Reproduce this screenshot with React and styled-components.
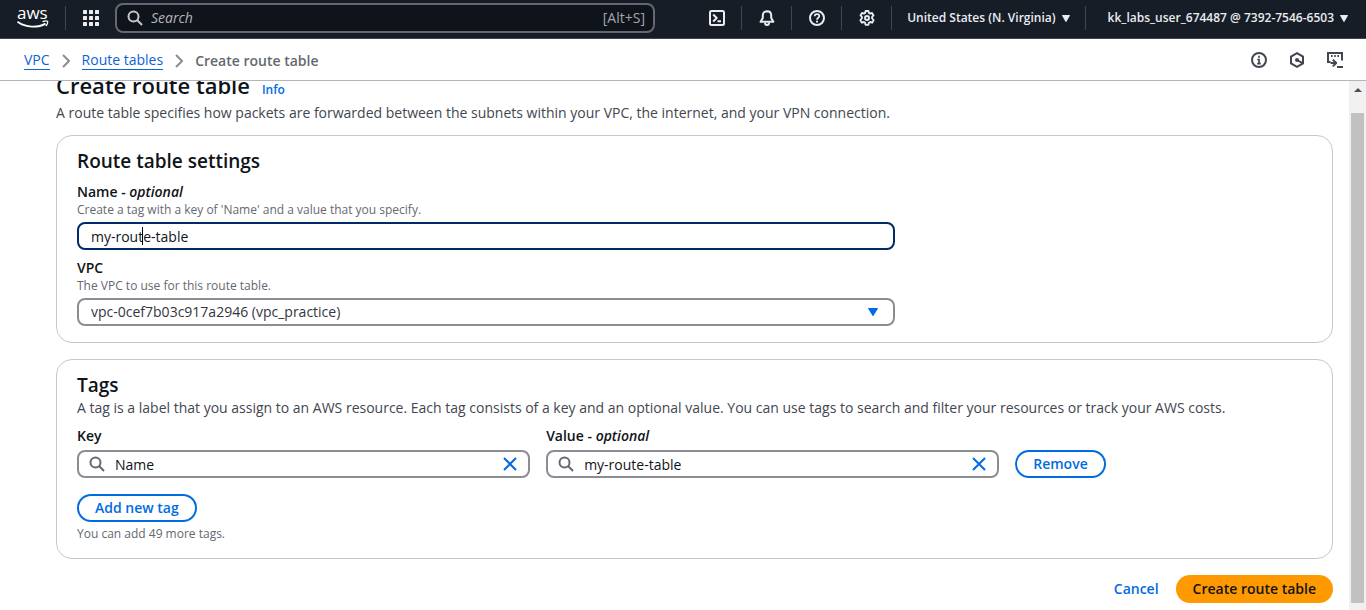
import React, { useLayoutEffect, useRef, useState } from "react";
import styled, { createGlobalStyle } from "styled-components";

const Global = createGlobalStyle`
  *, *::before, *::after { box-sizing: border-box; }
  body {
    margin: 0;
    background: #ffffff;
    color: #0f141a;
    font-family: "Open Sans", "Noto Sans", "Liberation Sans", sans-serif;
    font-size: 14px;
    line-height: 20px;
  }
  button, input, select { font: inherit; color: inherit; margin: 0; }
`;

const Shell = styled.div`
  display: flex;
  flex-direction: column;
  height: 100vh;
`;

const TopBar = styled.header`
  display: flex;
  align-items: center;
  flex: none;
  height: 39px;
  padding-bottom: 2px;
  background: #161d26;
  border-bottom: 1px solid #424650;
  color: #ebebf0;
`;

const LogoLink = styled.a`
  display: flex;
  justify-content: center;
  width: 66px;
  height: 24px;
  color: #ffffff;
  border-right: 1px solid #424650;
  svg { overflow: visible; }
`;

const BarButton = styled.button`
  display: flex;
  align-items: center;
  justify-content: center;
  height: 24px;
  width: ${(p) => (p.$last ? "49px" : "50px")};
  padding: 0;
  background: none;
  border: 0;
  border-right: ${(p) => (p.$last ? "0" : "1px solid #424650")};
  color: #ebebf0;
`;

const BarMenu = styled(BarButton)`
  gap: 6px;
  width: auto;
  padding: ${(p) => (p.$last ? "0 18px 0 22px" : "0 15px")};
  font-size: 12px;
  font-weight: 600;
  white-space: nowrap;
`;

const GlobalSearch = styled.label`
  display: flex;
  align-items: center;
  flex: 0 1 540px;
  height: 30px;
  padding: 0 8px 0 10px;
  gap: 8px;
  background: #0f141a;
  border: 2px solid #656871;
  border-radius: 8px;
  color: #c6c6cd;
  input {
    flex: 1;
    min-width: 0;
    padding: 0;
    background: none;
    border: 0;
    outline: 0;
  }
  input::placeholder { color: #b4b4bb; font-style: italic; opacity: 1; }
`;

const Shortcut = styled.span`
  color: #a4a4ad;
`;

const BarEnd = styled.div`
  display: flex;
  margin-left: auto;
`;

const SubBar = styled.div`
  display: flex;
  align-items: center;
  justify-content: space-between;
  flex: none;
  height: 42px;
  padding: 0 23px 0 24px;
  border-bottom: 1px solid #b4b4bb;
`;

const Crumbs = styled.nav`
  display: flex;
  align-items: center;
  gap: 12px;
  padding-top: 2px;
  color: #8c8c94;
  line-height: 18px;
`;

const CrumbLink = styled.a`
  color: #0f62d6;
  text-decoration: none;
  border-bottom: 1px solid #0f62d6;
`;

const CrumbCurrent = styled.span`
  color: #656871;
  font-weight: 600;
`;

const Tools = styled.div`
  display: flex;
  gap: 22px;
`;

const ToolButton = styled.button`
  display: flex;
  padding: 0;
  background: none;
  border: 0;
  color: #424650;
`;

const Body = styled.div`
  display: flex;
  flex: 1;
  min-height: 0;
`;

const ScrollArea = styled.main`
  flex: 1;
  min-width: 0;
  overflow-y: scroll;
  scrollbar-width: none;
  padding: 20px 16px 0 56px;
`;

const Content = styled.div`
  display: flex;
  flex-direction: column;
  gap: 16px;
  padding-bottom: 48px;
`;

const Rail = styled.div`
  display: flex;
  flex-direction: column;
  align-items: center;
  flex: none;
  width: 17px;
  padding-bottom: 7px;
  background: #f1f1f1;
  color: #505050;
`;

const RailArrow = styled.div`
  display: flex;
  align-items: center;
  justify-content: center;
  height: 17px;
  margin-bottom: 15px;
`;

const Thumb = styled.div`
  flex: 1;
  width: 13px;
  background: #c1c1c1;
`;

const PageHead = styled.div`
  margin-bottom: -4px;
`;

const TitleRow = styled.div`
  display: flex;
  align-items: baseline;
  gap: 12px;
  height: 32px;
`;

const PageTitle = styled.h1`
  margin: 0;
  font-size: 22px;
  line-height: 28px;
  font-weight: 600;
`;

const InfoLink = styled.a`
  color: #006ce0;
  font-size: 12px;
  font-weight: 600;
  text-decoration: none;
`;

const Lead = styled.p`
  margin: 0;
  color: #424650;
`;

const Card = styled.section`
  padding: 12px 20px 16px;
  border: 1px solid #c6c6cd;
  border-radius: 16px;
`;

const CardTitle = styled.h2`
  margin: 0;
  font-size: 19px;
  line-height: 26px;
  font-weight: 600;
`;

const FormGrid = styled.div`
  display: grid;
  grid-template-columns: repeat(12, 1fr);
  gap: 8px 16px;
  margin-top: 8px;
`;

const TagGrid = styled.div`
  display: grid;
  grid-template-columns: repeat(8, 1fr);
  align-items: end;
  gap: 16px;
  margin: 8px 0 16px;
`;

const Field = styled.div`
  grid-column: ${(p) => (p.$start ? "1 / " : "")}span ${(p) => p.$span};
  min-width: 0;
`;

const Label = styled.label`
  display: block;
  font-weight: 600;
`;

const Hint = styled.p`
  margin: ${(p) => (p.$below ? "4px 0 0" : "0")};
  color: #656871;
  font-size: 12px;
  line-height: 16px;
`;

const Control = styled.div`
  position: relative;
  display: flex;
  align-items: center;
  gap: 10px;
  height: 28px;
  margin-top: 4px;
  padding: ${(p) => (p.$search ? "0 10px" : "0 15px 0 12px")};
  border: 2px solid ${(p) => (p.$active ? "#002b66" : "#8c8c94")};
  border-radius: 8px;
  color: #656871;
  input, select {
    flex: 1;
    min-width: 0;
    height: 24px;
    padding: 0;
    background: none;
    border: 0;
    outline: 0;
    appearance: none;
    color: #0f141a;
  }
  select { color: #33363d; }
  > svg { flex: none; }
`;

const Caret = styled.span`
  position: absolute;
  left: 63px;
  top: 3px;
  width: 1px;
  height: 18px;
  background: #000000;
`;

const ClearButton = styled.button`
  display: flex;
  padding: 0;
  background: none;
  border: 0;
  color: #006ce0;
`;

const Button = styled.button`
  height: 28px;
  padding: 0 ${(p) => (p.$kind === "normal" ? "16px" : "15px")};
  border: 2px solid ${(p) => (p.$kind === "normal" ? "#006ce0" : p.$kind === "primary" ? "#ff9900" : "transparent")};
  border-radius: 14px;
  background: ${(p) => (p.$kind === "primary" ? "#ff9900" : "#ffffff")};
  color: ${(p) => (p.$kind === "primary" ? "#0f141a" : "#006ce0")};
  font-weight: 600;
  line-height: 20px;
  white-space: nowrap;
`;

const Actions = styled.div`
  display: flex;
  justify-content: flex-end;
`;

const Icon = ({ size = 16, width = 2, children }) => (
  <svg width={size} height={size} viewBox="0 0 16 16" fill="none" stroke="currentColor" strokeWidth={width} strokeLinejoin="round" aria-hidden="true">
    {children}
  </svg>
);

const AwsLogo = () => (
  <svg width="34" height="24" viewBox="0 0 34 24" fill="none" aria-hidden="true">
    <text x="1" y="13" fill="currentColor" fontSize="17" fontWeight="500">aws</text>
    <path d="M1.500 15.800C10 22 22 22 29.500 17.600" stroke="currentColor" strokeWidth="1.800" />
    <path d="M26.500 15.600C29 14.800 31 14.800 31.500 15.400C32 16.200 31.200 18.600 29.800 20" stroke="currentColor" strokeWidth="1.400" />
  </svg>
);

const GridIcon = () => (
  <svg width="16" height="16" viewBox="0 0 16 16" fill="currentColor" aria-hidden="true">
    {[0, 6, 12].map((y) => [0, 6, 12].map((x) => <rect key={`${x}-${y}`} x={x} y={y} width="4" height="4" rx="0.5" />))}
  </svg>
);

const SearchIcon = () => (
  <Icon>
    <circle cx="6.500" cy="6.500" r="5" />
    <path d="M10.300 10.300L15 15" />
  </Icon>
);

const CloseIcon = () => (
  <Icon>
    <path d="M2 2l12 12M14 2L2 14" />
  </Icon>
);

const ChevronIcon = () => (
  <svg width="8" height="14" viewBox="0 0 8 14" fill="none" stroke="currentColor" strokeWidth="2" aria-hidden="true">
    <path d="M1 1l6 6-6 6" />
  </svg>
);

const DownTriangle = ({ width = 8, height = 7, fill = "currentColor" }) => (
  <svg width={width} height={height} viewBox="0 0 10 8" fill={fill} preserveAspectRatio="none" aria-hidden="true">
    <path d="M0 0.500Q0 0 0.600 0H9.400Q10 0 10 0.500L5.500 7.700Q5 8.200 4.500 7.700Z" />
  </svg>
);

const TerminalIcon = () => (
  <Icon>
    <rect x="1" y="1" width="14" height="14" rx="1.500" />
    <path d="M4.200 4.500L7.700 8l-3.500 3.500M8.500 11.200H12" />
  </Icon>
);

const BellIcon = () => (
  <Icon>
    <path d="M8 1.200C5.300 1.200 3.800 3 3.800 5.500V8L1.600 11.800H14.400L12.200 8V5.500C12.200 3 10.700 1.200 8 1.200Z" />
    <path d="M6 12.500c0 1.600 .8 2.500 2 2.500s2-.9 2-2.500" />
  </Icon>
);

const HelpIcon = () => (
  <Icon>
    <circle cx="8" cy="8" r="7" />
    <path d="M5.700 6.300C5.700 4.800 6.700 4.100 8 4.100S10.300 4.900 10.300 6.100C10.300 7.700 8 7.800 8 9.700" strokeWidth="1.700" />
    <path d="M8 10.700v1.800" />
  </Icon>
);

const GearIcon = () => (
  <Icon width={1.900}>
    <path d="M6.600 1h2.800l.5 1.900 1.200.7 1.900-.6 1.500 2.400-1.400 1.400v1.400l1.500 2-1.500 2.500-2-.7-1.200.7-.5 2.200H6.600l-.5-2.200-1.200-.7-2 .7-1.500-2.500 1.500-2V6.800L1.500 5.400 3 3l1.900.6 1.200-.7z" />
    <circle cx="8" cy="8" r="2" />
  </Icon>
);

const InfoIcon = () => (
  <Icon>
    <circle cx="8" cy="8" r="7" />
    <path d="M8 3.800v2M6.300 7.500H8V12M6.200 11.700h3.600" strokeWidth="1.700" strokeLinejoin="miter" />
  </Icon>
);

const HexIcon = () => (
  <Icon>
    <path d="M8 1.200L14 4.600v6.800L8 14.800 2 11.400V4.600z" strokeLinejoin="miter" />
    <circle cx="8" cy="8" r="2" fill="currentColor" stroke="none" />
    <path d="M8 8l5.500 3.200" />
  </Icon>
);

const ShellIcon = () => (
  <Icon>
    <path d="M3.500 10H1V1h14v7.500" strokeLinejoin="miter" />
    <path d="M4 4h1.600M7.200 4h1.600M10.400 4H12" />
    <path d="M3.500 11H8M5.800 7.600L9.200 11l-3.400 3.400" />
    <path d="M10 15h6" />
  </Icon>
);

function TagInput({ id, label, optional, initial }) {
  const [value, setValue] = useState(initial);
  return (
    <Field $span={3}>
      <Label htmlFor={id}>
        {label}
        {optional && <> - <em>optional</em></>}
      </Label>
      <Control $search>
        <SearchIcon />
        <input id={id} value={value} onChange={(e) => setValue(e.target.value)} />
        <ClearButton type="button" aria-label={`Clear ${label}`} onClick={() => setValue("")}>
          <CloseIcon />
        </ClearButton>
      </Control>
    </Field>
  );
}

export default function App() {
  const scroller = useRef(null);
  useLayoutEffect(() => {
    scroller.current.scrollTop = 30;
  }, []);

  return (
    <Shell>
      <Global />
      <TopBar>
        <LogoLink href="#home" aria-label="AWS home"><AwsLogo /></LogoLink>
        <BarButton $last aria-label="Services"><GridIcon /></BarButton>
        <GlobalSearch>
          <SearchIcon />
          <input type="text" placeholder="Search" aria-label="Search" />
          <Shortcut>[Alt+S]</Shortcut>
        </GlobalSearch>
        <BarEnd>
          <BarButton aria-label="CloudShell"><TerminalIcon /></BarButton>
          <BarButton aria-label="Notifications"><BellIcon /></BarButton>
          <BarButton aria-label="Help"><HelpIcon /></BarButton>
          <BarButton aria-label="Settings"><GearIcon /></BarButton>
          <BarMenu>United States (N. Virginia) <DownTriangle /></BarMenu>
          <BarMenu $last>kk_labs_user_674487 @ 7392-7546-6503 <DownTriangle /></BarMenu>
        </BarEnd>
      </TopBar>

      <SubBar>
        <Crumbs aria-label="Breadcrumbs">
          <CrumbLink href="#vpc">VPC</CrumbLink>
          <ChevronIcon />
          <CrumbLink href="#route-tables">Route tables</CrumbLink>
          <ChevronIcon />
          <CrumbCurrent>Create route table</CrumbCurrent>
        </Crumbs>
        <Tools>
          <ToolButton aria-label="Info panel"><InfoIcon /></ToolButton>
          <ToolButton aria-label="Diagnostics"><HexIcon /></ToolButton>
          <ToolButton aria-label="Open shell"><ShellIcon /></ToolButton>
        </Tools>
      </SubBar>

      <Body>
        <ScrollArea ref={scroller}>
          <Content>
            <PageHead>
              <TitleRow>
                <PageTitle>Create route table</PageTitle>
                <InfoLink href="#info">Info</InfoLink>
              </TitleRow>
              <Lead>A route table specifies how packets are forwarded between the subnets within your VPC, the internet, and your VPN connection.</Lead>
            </PageHead>

            <Card>
              <CardTitle>Route table settings</CardTitle>
              <FormGrid>
                <Field $start $span={8}>
                  <Label htmlFor="rt-name">Name - <em>optional</em></Label>
                  <Hint>Create a tag with a key of 'Name' and a value that you specify.</Hint>
                  <Control $active>
                    <input id="rt-name" defaultValue="my-route-table" />
                    <Caret />
                  </Control>
                </Field>
                <Field $start $span={8}>
                  <Label htmlFor="rt-vpc">VPC</Label>
                  <Hint>The VPC to use for this route table.</Hint>
                  <Control>
                    <select id="rt-vpc">
                      <option>vpc-0cef7b03c917a2946 (vpc_practice)</option>
                    </select>
                    <DownTriangle width={10} height={8} fill="#006ce0" />
                  </Control>
                </Field>
              </FormGrid>
            </Card>

            <Card>
              <CardTitle>Tags</CardTitle>
              <Lead>A tag is a label that you assign to an AWS resource. Each tag consists of a key and an optional value. You can use tags to search and filter your resources or track your AWS costs.</Lead>
              <TagGrid>
                <TagInput id="tag-key" label="Key" initial="Name" />
                <TagInput id="tag-value" label="Value" optional initial="my-route-table" />
                <Field $span={2}>
                  <Button type="button" $kind="normal">Remove</Button>
                </Field>
              </TagGrid>
              <Button type="button" $kind="normal">Add new tag</Button>
              <Hint $below>You can add 49 more tags.</Hint>
            </Card>

            <Actions>
              <Button type="button" $kind="link">Cancel</Button>
              <Button type="submit" $kind="primary">Create route table</Button>
            </Actions>
          </Content>
        </ScrollArea>
        <Rail aria-hidden="true">
          <RailArrow>
            <svg width="8" height="4" viewBox="0 0 8 4" fill="currentColor"><path d="M0 4L4 0l4 4z" /></svg>
          </RailArrow>
          <Thumb />
        </Rail>
      </Body>
    </Shell>
  );
}
